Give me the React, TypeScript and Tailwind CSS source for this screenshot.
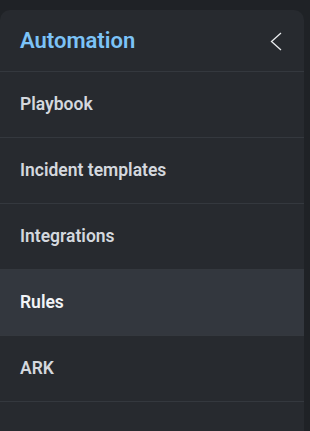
const items = ["Playbook", "Incident templates", "Integrations", "Rules", "ARK"];

export default function App() {
    const active = "Rules";

    return (
        <div className="h-[431px] w-[310px] overflow-hidden bg-[#1f2226] pt-[10px] font-['Roboto',sans-serif]">
            <div className="h-[440px] w-[304px] rounded-[10px] bg-[#272a2f]">
                <div className="flex h-[62px] items-center justify-between border-b border-[#34383e] pl-5 pr-[22px]">
                    <span className="text-[22px] font-semibold leading-none text-[#7cc3f7]">Automation</span>
                    {/* collapse chevron */}
                    <svg width="12" height="19" viewBox="0 0 12 19" fill="none" className="mt-[1px]">
                        <polyline points="11,1 1.5,9.5 11,18" stroke="#e8eaed" strokeWidth="1.3" />
                    </svg>
                </div>
                {items.map((item) => (
                    <div
                        key={item}
                        className={`flex h-[66px] items-center border-b border-[#34383e] px-5 text-[17.5px] font-semibold ${
                            item === active ? "bg-[#33373e] text-[#f2f4f7]" : "text-[#d4d8de]"
                        }`}
                    >
                        {item}
                    </div>
                ))}
            </div>
        </div>
    );
}
